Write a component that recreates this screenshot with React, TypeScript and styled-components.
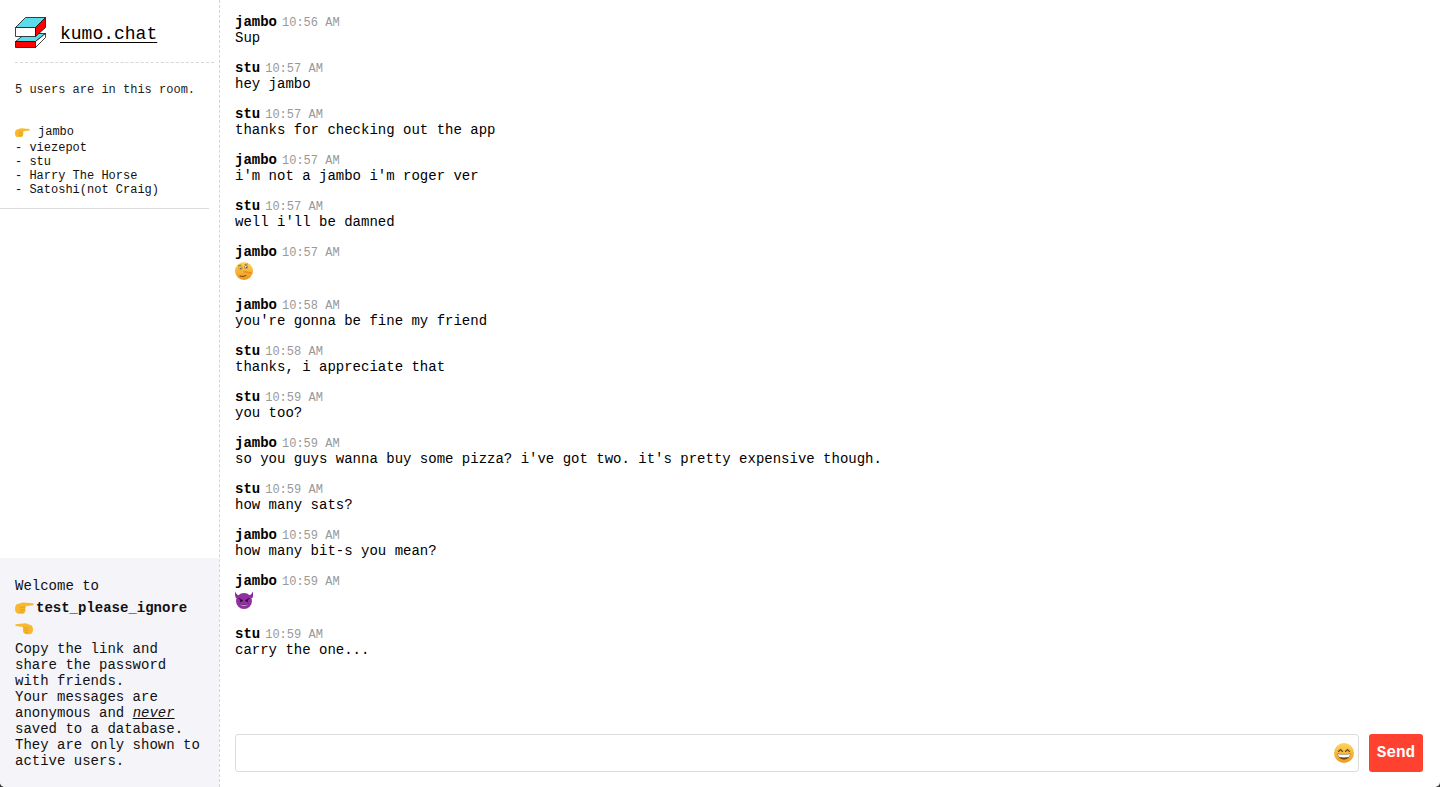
import React from "react";
import styled, { createGlobalStyle } from "styled-components";

const Global = createGlobalStyle`
  html, body { margin: 0; padding: 0; height: 100%; background: #3a3a3a; }
  #root { height: 100%; }
  * { box-sizing: border-box; }
`;
const Page = styled.div`
  display: flex; height: 787px; overflow: hidden; background: #fff; color: #000;
  font-family: "Liberation Mono", "Courier New", monospace; border-radius: 0 0 5px 5px;
`;
const Sidebar = styled.aside`
  width: 220px; flex: none; display: flex; flex-direction: column;
  border-right: 1px dashed #d4d4d4;
`;
const Brand = styled.div`
  display: flex; align-items: center; gap: 14px; margin: 0 5px 0 15px; height: 63px; padding-top: 5px;
  border-bottom: 1px dashed #d8d8d8;
`;
const BrandName = styled.a`
  font-size: 18px; line-height: 20px; color: #000; text-decoration: underline; text-underline-offset: 3px;
`;
const Glyph = styled.svg`
  display: block; flex: none;
`;
const LogoMark = styled(Glyph)`
  margin-top: -3px;
`;
const UserCount = styled.p`
  margin: 20px 0 0 15px; font-size: 12px; line-height: 14px; color: #222;
`;
const UserList = styled.ul`
  list-style: none; margin: 26px 10px 0 0; padding: 0 0 11px 15px; border-bottom: 1px solid #dcdcdc;
  font-size: 12px; line-height: 14px; color: #111;
`;
const User = styled.li<{ $me?: boolean }>`
  display: flex; align-items: center; white-space: pre; height: ${(p) => (p.$me ? "18px" : "14px")};
  gap: ${(p) => (p.$me ? "8px" : "0")};
`;
const Welcome = styled.section`
  margin-top: auto; height: 229px; padding: 20px 15px 0; background: #f4f4f9;
  font-size: 14px; line-height: 16px; color: #111;
`;
const RoomLine = styled.div`
  display: flex; align-items: center; height: 21px; margin-top: 3px;
`;
const RoomName = styled.b`
  font-weight: 700; margin-left: 2px;
`;
const PointLine = styled.div`
  display: flex; align-items: center; height: 21px; margin-bottom: 2px;
`;
const Flip = styled.span`
  display: block; transform: scaleX(-1);
`;
const Never = styled.em`
  text-decoration: underline;
`;
const Main = styled.main`
  flex: 1; min-width: 0; display: flex; flex-direction: column; padding: 14px 17px 15px 15px;
`;
const Messages = styled.div`
  flex: 1; min-height: 0;
`;
const Message = styled.article`
  margin-bottom: 14px;
`;
const Meta = styled.div`
  display: flex; align-items: baseline; gap: 5px; height: 16px; line-height: 16px;
`;
const Author = styled.b`
  font-size: 14px; font-weight: 700;
`;
const Time = styled.time`
  font-size: 12px; color: #999;
`;
const Body = styled.div`
  font-size: 14px; line-height: 16px; white-space: pre-wrap;
`;
const EmojiBody = styled.div`
  display: flex; align-items: center; height: 23px; padding-bottom: 2px;
`;
const Composer = styled.form`
  display: flex; gap: 10px; margin: 0;
`;
const InputWrap = styled.div`
  position: relative; flex: 1; height: 38px;
`;
const Input = styled.input`
  display: block; width: 100%; height: 100%; border: 1px solid #dcdcdc; border-radius: 3px; background: #fff;
`;
const PickerIcon = styled.span`
  position: absolute; right: 5px; top: 9px; display: flex;
`;
const Send = styled.button`
  width: 54px; height: 38px; border: 0; border-radius: 3px; padding: 0; background: #ff4130; color: #fff;
  font-family: inherit; font-size: 16px; font-weight: 700;
`;

const Logo = () => (
  <LogoMark as="svg" width="31" height="31" viewBox="-.5 -.5 31 31">
    <path d="M0 24 10 16h20l-10 8z" fill="#5bdcea" stroke="#111" strokeWidth=".8" />
    <path d="M0 24h20v6H0z" fill="#f00" stroke="#111" strokeWidth=".8" />
    <path d="M20 24l10-8v4L20 30z" fill="#fff" stroke="#111" strokeWidth=".8" />
    <path d="M0 10 10 0h20L20 10z" fill="#5bdcea" stroke="#111" strokeWidth=".8" />
    <path d="M0 10h20v9H0z" fill="#fff" stroke="#111" strokeWidth=".8" />
    <path d="M20 10 30 0v10l-10 9z" fill="#f00" stroke="#111" strokeWidth=".8" />
  </LogoMark>
);

const PointRight = ({ w = 15 }: { w?: number }) => (
  <Glyph width={w} height={w * 0.7} viewBox="0 0 20 14">
    <path d="M8 1.500 19 2.500c1 .4 1 1.700 0 2L11 5.500l0 5c-.5 2-2 3-4 3H4c-2 0-4-1.500-4-5S1.500 3 4 3z" fill="#f9b92c" />
    <path d="M5 6.500h6M5 9h5.500M5 11.500h4" stroke="#d8931c" strokeWidth=".7" fill="none" />
  </Glyph>
);
const PointLeft = () => (
  <Flip><PointRight w={18} /></Flip>
);
const Grin = () => (
  <Glyph width="20" height="20" viewBox="0 0 20 20">
    <defs><linearGradient id="g" x1="0" y1="0" x2="0" y2="1"><stop offset="0" stopColor="#fcd75c" /><stop offset="1" stopColor="#ee9a1c" /></linearGradient></defs>
    <circle cx="10" cy="10" r="10" fill="url(#g)" />
    <path d="M4.500 8.500 6.500 6.500l2 2M11.500 8.500l2-2 2 2" stroke="#6a4512" strokeWidth="1.100" fill="none" strokeLinecap="round" />
    <path d="M3.500 10.500c4 .9 9 .9 13 0-.4 3.800-3 6-6.500 6s-6.100-2.200-6.500-6z" fill="#6a4512" />
    <path d="M4 11c4 .7 8 .7 12 0-.2 1.300-.5 2.200-1 3-3 .6-7 .6-10 0-.5-.8-.8-1.700-1-3z" fill="#fff" />
  </Glyph>
);
const Lying = () => (
  <Glyph width="18" height="18" viewBox="0 0 18 18">
    <defs><linearGradient id="l" x1="0" y1="0" x2="0" y2="1"><stop offset="0" stopColor="#fcd75c" /><stop offset="1" stopColor="#ee9518" /></linearGradient></defs>
    <circle cx="9" cy="9" r="9" fill="url(#l)" />
    <path d="M3.500 3.500 6 3M10 2.500l2.500-.5" stroke="#6b4210" strokeWidth=".6" strokeLinecap="round" />
    <circle cx="5.500" cy="6" r="1.600" fill="#fff" stroke="#6b4210" strokeWidth=".5" />
    <circle cx="11" cy="5" r="1.600" fill="#fff" stroke="#6b4210" strokeWidth=".5" />
    <circle cx="5.800" cy="6.200" r=".7" fill="#3a2408" /><circle cx="11.300" cy="5.200" r=".7" fill="#3a2408" />
    <path d="M8.500 8.500 17 10.500c.5.600.3 1.300-.5 1.400L8.500 10.500z" fill="#e98f25" />
    <path d="M5 14c2 .8 4 .6 6-.6" stroke="#6b4210" strokeWidth="1" fill="none" strokeLinecap="round" />
  </Glyph>
);
const Devil = () => (
  <Glyph width="18" height="18" viewBox="0 0 18 18">
    <path d="M.3.500C1 3 2.500 4 4 4.500h10C15.500 4 17 3 17.700.500c1 3 .5 5-.4 6.500L1 7C0 5.500-.2 3 .3.500z" fill="#8a2aa8" />
    <circle cx="9" cy="10" r="8" fill="#92309f" />
    <path d="M4 7.500 7.500 9.500M14 7.500 10.500 9.500" stroke="#3b0f52" strokeWidth="1.100" strokeLinecap="round" />
    <circle cx="6" cy="10" r="1.100" fill="#2a0a3a" /><circle cx="12" cy="10" r="1.100" fill="#2a0a3a" />
    <path d="M4.500 12.500c2.500 2 6.500 2 9 0-1 3.500-8 3.500-9 0z" fill="#fff" stroke="#3b0f52" strokeWidth=".5" />
  </Glyph>
);

const log: [string, string, React.ReactNode][] = [
  ["jambo", "10:56 AM", "Sup"],
  ["stu", "10:57 AM", "hey jambo"],
  ["stu", "10:57 AM", "thanks for checking out the app"],
  ["jambo", "10:57 AM", "i'm not a jambo i'm roger ver"],
  ["stu", "10:57 AM", "well i'll be damned"],
  ["jambo", "10:57 AM", <EmojiBody><Lying /></EmojiBody>],
  ["jambo", "10:58 AM", "you're gonna be fine my friend"],
  ["stu", "10:58 AM", "thanks, i appreciate that"],
  ["stu", "10:59 AM", "you too?"],
  ["jambo", "10:59 AM", "so you guys wanna buy some pizza? i've got two. it's pretty expensive though."],
  ["stu", "10:59 AM", "how many sats?"],
  ["jambo", "10:59 AM", "how many bit-s you mean?"],
  ["jambo", "10:59 AM", <EmojiBody><Devil /></EmojiBody>],
  ["stu", "10:59 AM", "carry the one..."],
];

export default function App() {
  return (
    <Page>
      <Global />
      <Sidebar>
        <Brand><Logo /><BrandName>kumo.chat</BrandName></Brand>
        <UserCount>5 users are in this room.</UserCount>
        <UserList>
          <User $me><PointRight />jambo</User>
          <User>- viezepot</User>
          <User>- stu</User>
          <User>- Harry The Horse</User>
          <User>- Satoshi(not Craig)</User>
        </UserList>
        <Welcome>
          Welcome to
          <RoomLine><PointRight w={19} /><RoomName>test_please_ignore</RoomName></RoomLine>
          <PointLine><PointLeft /></PointLine>
          Copy the link and share the password with friends.
          <br />
          Your messages are anonymous and <Never>never</Never> saved to a database. They are only shown to active users.
        </Welcome>
      </Sidebar>
      <Main>
        <Messages>
          {log.map(([a, t, b], i) => (
            <Message key={i}>
              <Meta><Author>{a}</Author><Time>{t}</Time></Meta>
              <Body>{b}</Body>
            </Message>
          ))}
        </Messages>
        <Composer onSubmit={(e) => e.preventDefault()}>
          <InputWrap><Input /><PickerIcon><Grin /></PickerIcon></InputWrap>
          <Send type="button">Send</Send>
        </Composer>
      </Main>
    </Page>
  );
}
